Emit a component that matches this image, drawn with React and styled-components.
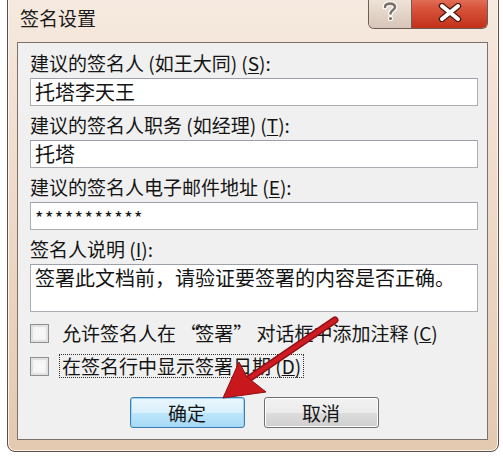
import React from "react";
import styled, { createGlobalStyle } from "styled-components";

const GlobalStyle = createGlobalStyle`
  html, body {
    margin: 0;
    padding: 0;
    background: #ffffff;
  }
  body {
    width: 503px;
    height: 457px;
    overflow: hidden;
    font-family: "Noto Sans CJK SC", "Noto Sans", sans-serif;
    color: #141414;
  }
`;

const Page = styled.div`
  position: relative;
  width: 503px;
  height: 457px;
  overflow: hidden;
`;

const Window = styled.div`
  box-sizing: border-box;
  margin: -10px 4px 0 7px;
  height: 462px;
  display: flex;
  flex-direction: column;
  border: 1px solid #5e5047;
  border-radius: 8px;
  background: linear-gradient(180deg, #f6eae0 0%, #efdccb 40%, #e4c9b1 100%);
  box-shadow: inset 0 0 0 1px #fbf3ec;
`;

const TitleBar = styled.div`
  height: 51px;
  display: flex;
  align-items: flex-start;
  flex-shrink: 0;
`;

const Title = styled.div`
  padding: 16px 0 0 12px;
  font-size: 19px;
  line-height: 22px;
  color: #1a1a1a;
`;

const CaptionGroup = styled.div`
  margin-left: auto;
  margin-right: 10px;
  display: flex;
  border: 1px solid #6d5e55;
  border-top: none;
  border-radius: 0 0 6px 6px;
  overflow: hidden;
  height: 37px;
`;

const CaptionButton = styled.div`
  width: ${p => p.$w}px;
  display: flex;
  align-items: flex-end;
  justify-content: center;
  padding-bottom: 6px;
  box-sizing: border-box;
  background: ${p =>
    p.$danger
      ? "linear-gradient(180deg, #e98a76 0%, #d9553c 45%, #c2311a 100%)"
      : "linear-gradient(180deg, #f5ebe2 0%, #e7d8cc 50%, #d6c5b8 100%)"};
  & + & {
    border-left: 1px solid #6d5e55;
  }
`;

const Client = styled.div`
  flex: 1;
  margin: 0 10px 11px 9px;
  border: 1px solid #7f7169;
  background: #f0f0f0;
  padding: 9px 9px 0 12px;
  display: flex;
  flex-direction: column;
`;

const Field = styled.div`
  display: flex;
  flex-direction: column;
  margin-bottom: 8px;
`;

const Label = styled.div`
  font-size: 19px;
  line-height: 22px;
  height: 22px;
  margin-bottom: 4px;
  white-space: nowrap;
  u {
    text-decoration-thickness: 1px;
    text-underline-offset: 2px;
  }
`;

const Input = styled.div`
  box-sizing: border-box;
  height: ${p => (p.$tall ? 48 : 28)}px;
  background: #ffffff;
  border: 1px solid #abadb3;
  border-top-color: #9ca0a8;
  padding: 2px 4px;
  font-size: ${p => (p.$small ? 18 : 20)}px;
  line-height: ${p => (p.$small ? 24 : 22)}px;
  white-space: nowrap;
  overflow: hidden;
  letter-spacing: ${p => (p.$small ? "1.5px" : "0")};
`;

const CheckRow = styled.div`
  display: flex;
  align-items: center;
  height: 26px;
  margin-top: ${p => (p.$first ? 0 : 7)}px;
`;

const Box = styled.div`
  box-sizing: border-box;
  width: 19px;
  height: 19px;
  border: 1px solid #8f8f8f;
  background: #f7f7f7;
  box-shadow: inset 0 0 0 2px #e2e2e2, inset 0 0 0 4px #f4f4f4;
  margin: 0 10px 0 0;
  flex-shrink: 0;
`;

const CheckText = styled.span`
  font-size: 19px;
  line-height: 22px;
  padding: 0 2px;
  white-space: nowrap;
  border: 1px dotted ${p => (p.$focus ? "#333" : "transparent")};
`;

const Quote = styled.span`
  letter-spacing: -4px;
`;

const Buttons = styled.div`
  display: flex;
  justify-content: center;
  gap: 19px;
  margin-top: 18px;
`;

const Button = styled.div`
  box-sizing: border-box;
  width: 115px;
  height: 31px;
  display: flex;
  align-items: center;
  justify-content: center;
  font-size: 19px;
  border-radius: 3px;
  border: 1px solid ${p => (p.$primary ? "#3c7fb1" : "#707070")};
  background: ${p =>
    p.$primary
      ? "linear-gradient(180deg, #eaf6fd 0%, #d9f0fc 50%, #bee6fd 51%, #a7d9f5 100%)"
      : "linear-gradient(180deg, #f2f2f2 0%, #ebebeb 50%, #dddddd 51%, #cfcfcf 100%)"};
  box-shadow: inset 0 0 0 1px ${p => (p.$primary ? "#9fd5f2" : "#fcfcfc")};
`;

const Overlay = styled.svg`
  position: absolute;
  left: 0;
  top: 0;
  pointer-events: none;
`;

function HelpGlyph() {
  return (
    <svg width="16" height="22" viewBox="0 0 16 22">
      <path
        d="M3 7 C3 2.5 13 2.5 13 7 C13 10 8.5 10.5 8.5 13.5"
        fill="none"
        stroke="#fff"
        strokeWidth="5"
        strokeLinecap="round"
      />
      <path
        d="M3 7 C3 2.5 13 2.5 13 7 C13 10 8.5 10.5 8.5 13.5"
        fill="none"
        stroke="#7a7068"
        strokeWidth="2.6"
        strokeLinecap="round"
      />
      <circle cx="8.5" cy="18.5" r="2.6" fill="#fff" />
      <circle cx="8.5" cy="18.5" r="1.6" fill="#7a7068" />
    </svg>
  );
}

function CloseGlyph() {
  return (
    <svg width="24" height="19" viewBox="0 0 24 19">
      <path d="M4 3 L20 16 M20 3 L4 16" stroke="#4a1a12" strokeWidth="6.5" strokeLinecap="round" />
      <path d="M4 3 L20 16 M20 3 L4 16" stroke="#ffffff" strokeWidth="4" strokeLinecap="round" />
    </svg>
  );
}

export default function App() {
  return (
    <Page>
      <GlobalStyle />
      <Window>
        <TitleBar>
          <Title>签名设置</Title>
          <CaptionGroup>
            <CaptionButton $w={42}>
              <HelpGlyph />
            </CaptionButton>
            <CaptionButton $w={76} $danger>
              <CloseGlyph />
            </CaptionButton>
          </CaptionGroup>
        </TitleBar>
        <Client>
          <Field>
            <Label>建议的签名人 (如王大同) (<u>S</u>):</Label>
            <Input>托塔李天王</Input>
          </Field>
          <Field>
            <Label>建议的签名人职务 (如经理) (<u>T</u>):</Label>
            <Input>托塔</Input>
          </Field>
          <Field>
            <Label>建议的签名人电子邮件地址 (<u>E</u>):</Label>
            <Input $small>***********</Input>
          </Field>
          <Field>
            <Label>签名人说明 (<u>I</u>):</Label>
            <Input $tall>签署此文档前，请验证要签署的内容是否正确。</Input>
          </Field>
          <CheckRow $first>
            <Box />
            <CheckText>
              允许签名人在 <Quote>“</Quote>签署” 对话框中添加注释 (<u>C</u>)
            </CheckText>
          </CheckRow>
          <CheckRow>
            <Box />
            <CheckText $focus>在签名行中显示签署日期 (<u>D</u>)</CheckText>
          </CheckRow>
          <Buttons>
            <Button $primary>确定</Button>
            <Button>取消</Button>
          </Buttons>
        </Client>
      </Window>
      <Overlay width="503" height="457" viewBox="0 0 503 457">
        <line x1="335" y1="320" x2="244" y2="382" stroke="#8e0f13" strokeWidth="7" strokeLinecap="round" />
        <line x1="335" y1="320" x2="244" y2="382" stroke="#cf1c22" strokeWidth="4.5" strokeLinecap="round" />
        <polygon points="223,398 239,362 247,377 266,392" fill="#c8181e" stroke="#8e0f13" strokeWidth="1" strokeLinejoin="round" />
      </Overlay>
    </Page>
  );
}
